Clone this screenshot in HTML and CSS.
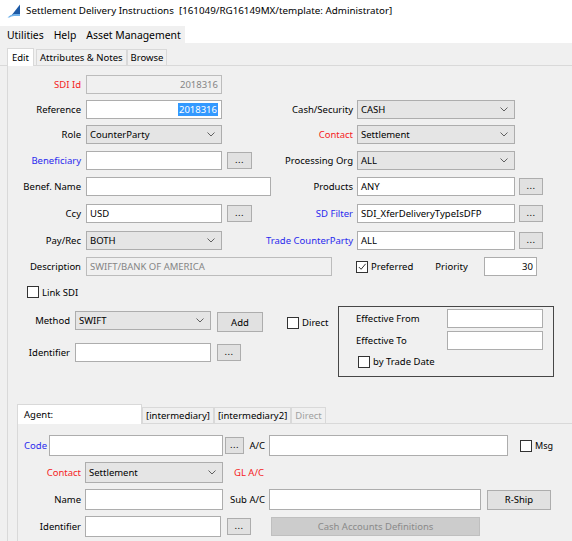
FILE: index.html
```html
<!DOCTYPE html>
<html lang="en">
<head>
    <meta charset="UTF-8">
    <meta name="viewport" content="width=device-width, initial-scale=1.0">
    <title>Settlement Delivery Instructions</title>
    <link rel="stylesheet" href="styles.css">
</head>
<body>

<div class="window">
    <div class="titlebar">
        <svg class="app-icon" viewBox="0 0 14 14" width="14" height="14">
            <path d="M13 0.5 L13 12 L4 12 Z" fill="#1d5aa6"/>
            <path d="M0.5 13.5 Q3 10.5 7 10 L13 10 L13 12 L7 12 Q4 12.3 2.5 13.5 Z" fill="#6fb1ea"/>
        </svg>
        <span class="title">Settlement Delivery Instructions&nbsp; [161049/RG16149MX/template: Administrator]</span>
    </div>

    <div class="menubar-row">
        <div class="menubar">
            <span>Utilities</span>
            <span>Help</span>
            <span>Asset Management</span>
        </div>
    </div>

    <div class="tabstrip main-tabs">
        <div class="tab active">Edit</div>
        <div class="tab">Attributes &amp; Notes</div>
        <div class="tab">Browse</div>
    </div>

    <div class="panel">
        <!-- header fields -->
        <div class="sdi-grid">
            <div class="lbl c-lbl red">SDI Id</div>
            <div class="field c-fld disabled num">2018316</div>

            <div class="lbl c-lbl">Reference</div>
            <div class="field c-fld num"><span class="selected">2018316</span></div>
            <div class="lbl c-rlbl">Cash/Security</div>
            <div class="field combo c-rfld"><span>CASH</span><svg class="chev" viewBox="0 0 8 5"><path d="M0.5 0.5 L4 4 L7.5 0.5" fill="none" stroke="#606060" stroke-width="1"/></svg></div>

            <div class="lbl c-lbl">Role</div>
            <div class="field combo c-fld"><span>CounterParty</span><svg class="chev" viewBox="0 0 8 5"><path d="M0.5 0.5 L4 4 L7.5 0.5" fill="none" stroke="#606060" stroke-width="1"/></svg></div>
            <div class="lbl c-rlbl red">Contact</div>
            <div class="field combo c-rfld"><span>Settlement</span><svg class="chev" viewBox="0 0 8 5"><path d="M0.5 0.5 L4 4 L7.5 0.5" fill="none" stroke="#606060" stroke-width="1"/></svg></div>

            <div class="lbl c-lbl blue">Beneficiary</div>
            <div class="field c-fld"></div>
            <div class="btn dots c-btn">...</div>
            <div class="lbl c-rlbl">Processing Org</div>
            <div class="field combo c-rfld"><span>ALL</span><svg class="chev" viewBox="0 0 8 5"><path d="M0.5 0.5 L4 4 L7.5 0.5" fill="none" stroke="#606060" stroke-width="1"/></svg></div>

            <div class="lbl c-lbl">Benef. Name</div>
            <div class="field c-fld wide-name"></div>
            <div class="lbl c-rlbl">Products</div>
            <div class="field c-rfld">ANY</div>
            <div class="btn dots c-rbtn">...</div>

            <div class="lbl c-lbl">Ccy</div>
            <div class="field c-fld">USD</div>
            <div class="btn dots c-btn">...</div>
            <div class="lbl c-rlbl blue">SD Filter</div>
            <div class="field c-rfld">SDI_XferDeliveryTypeIsDFP</div>
            <div class="btn dots c-rbtn">...</div>

            <div class="lbl c-lbl">Pay/Rec</div>
            <div class="field combo c-fld"><span>BOTH</span><svg class="chev" viewBox="0 0 8 5"><path d="M0.5 0.5 L4 4 L7.5 0.5" fill="none" stroke="#606060" stroke-width="1"/></svg></div>
            <div class="lbl c-rlbl blue">Trade CounterParty</div>
            <div class="field c-rfld">ALL</div>
            <div class="btn dots c-rbtn">...</div>

            <div class="lbl c-lbl">Description</div>
            <div class="field c-fld disabled wide-desc">SWIFT/BANK OF AMERICA</div>
            <div class="pref-group">
                <span class="check checked"><svg viewBox="0 0 11 11"><path d="M2 5.5 L4.5 8 L9.5 2" fill="none" stroke="#333" stroke-width="1.1"/></svg></span>
                <span class="check-label">Preferred</span>
                <span class="priority-label">Priority</span>
                <div class="field num priority">30</div>
            </div>
        </div>

        <div class="link-row">
            <span class="check"></span>
            <span class="check-label">Link SDI</span>
        </div>

        <div class="method-area">
            <div class="method-grid">
                <div class="lbl">Method</div>
                <div class="field combo"><span>SWIFT</span><svg class="chev" viewBox="0 0 8 5"><path d="M0.5 0.5 L4 4 L7.5 0.5" fill="none" stroke="#606060" stroke-width="1"/></svg></div>
                <div class="btn add-btn">Add</div>

                <div class="lbl">Identifier</div>
                <div class="field"></div>
                <div class="btn dots">...</div>
            </div>

            <div class="direct">
                <span class="check"></span>
                <span class="check-label">Direct</span>
            </div>

            <div class="effective-box">
                <div class="eff-grid">
                    <div class="eff-label">Effective From</div>
                    <div class="field"></div>
                    <div class="eff-label">Effective To</div>
                    <div class="field"></div>
                </div>
                <div class="trade-date">
                    <span class="check"></span>
                    <span class="check-label">by Trade Date</span>
                </div>
            </div>
        </div>

        <!-- agent / intermediary details -->
        <div class="agent">
            <div class="tabstrip agent-tabs">
                <div class="tab active agent-tab">Agent:</div>
                <div class="tab">[intermediary]</div>
                <div class="tab">[intermediary2]</div>
                <div class="tab disabled-tab">Direct</div>
            </div>
            <div class="agent-panel">
                <div class="arow">
                    <div class="lbl blue code-lbl">Code</div>
                    <div class="field code-fld"></div>
                    <div class="btn dots code-btn">...</div>
                    <div class="lbl ac-lbl">A/C</div>
                    <div class="field ac-fld"></div>
                    <span class="check msg-check"></span>
                    <span class="check-label small">Msg</span>
                </div>
                <div class="arow">
                    <div class="lbl red a-lbl">Contact</div>
                    <div class="field combo a-fld"><span>Settlement</span><svg class="chev" viewBox="0 0 8 5"><path d="M0.5 0.5 L4 4 L7.5 0.5" fill="none" stroke="#606060" stroke-width="1"/></svg></div>
                    <div class="lbl red gl-lbl">GL A/C</div>
                </div>
                <div class="arow">
                    <div class="lbl a-lbl">Name</div>
                    <div class="field a-fld"></div>
                    <div class="lbl sub-lbl">Sub A/C</div>
                    <div class="field sub-fld"></div>
                    <div class="btn rship">R-Ship</div>
                </div>
                <div class="arow">
                    <div class="lbl a-lbl">Identifier</div>
                    <div class="field a-fld short"></div>
                    <div class="btn dots id-btn">...</div>
                    <div class="btn off cash-btn">Cash Accounts Definitions</div>
                </div>
            </div>
        </div>
    </div>
</div>

</body>
</html>
```

FILE: styles.css
```css
* {
    box-sizing: border-box;
}

body {
    margin: 0;
    font-family: "Noto Sans", "Open Sans", sans-serif;
    font-size: 9.5px;
    color: #000;
    background-color: #f0f0f0;
}

.window {
    width: 572px;
    height: 541px;
    overflow: hidden;
    background-color: #f0f0f0;
}

/* title + menu */
.titlebar {
    height: 26px;
    background-color: #fff;
    display: flex;
    align-items: center;
    padding: 0 0 5px 7px;
}

.app-icon {
    margin-right: 5px;
}

.title {
    font-size: 9.8px;
    white-space: nowrap;
}

.menubar-row {
    height: 17px;
    background-color: #fff;
}

.menubar {
    width: 185px;
    height: 17px;
    background-color: #f0f0f0;
    display: flex;
    align-items: center;
    padding-left: 7px;
    font-size: 10.4px;
    white-space: nowrap;
}

.menubar span {
    margin-right: 10px;
}

/* tabs */
.tabstrip {
    display: flex;
    align-items: flex-end;
    border-bottom: 1px solid #d9d9d9;
}

.main-tabs {
    height: 23px;
    padding-left: 7px;
}

.tab {
    height: 16px;
    padding: 0 3px;
    border: 1px solid #d9d9d9;
    border-bottom: none;
    background-color: #f0f0f0;
    display: flex;
    align-items: center;
    white-space: nowrap;
}

.tab.active {
    height: 18px;
    margin-bottom: -1px;
    margin-right: 2px;
    padding: 0 4px;
    background-color: #fff;
}

.disabled-tab {
    color: #a0a0a0;
}

.panel {
    margin-left: 7px;
    border-left: 1px solid #d9d9d9;
    height: 475px;
    padding-top: 9px;
}

/* generic controls */
.lbl {
    white-space: nowrap;
    display: flex;
    align-items: center;
    justify-content: flex-end;
    height: 19px;
}

.red {
    color: #f51c24;
}

.blue {
    color: #2a2aee;
}

.field {
    height: 19px;
    border: 1px solid #adadad;
    background-color: #fff;
    padding: 0 3px;
    display: flex;
    align-items: center;
    white-space: nowrap;
    overflow: hidden;
}

.field.num {
    justify-content: flex-end;
}

.field.disabled {
    background-color: #f0f0f0;
    border-color: #bcbcbc;
    color: #858585;
}

.selected {
    background-color: #3399ff;
    color: #fff;
    padding: 0 1px;
}

.combo {
    background-color: #e5e5e5;
    justify-content: space-between;
    padding-right: 6px;
}

.chev {
    width: 8px;
    height: 5px;
}

.btn {
    height: 17px;
    border: 1px solid #adadad;
    background-color: #e1e1e1;
    display: flex;
    align-items: center;
    justify-content: center;
    white-space: nowrap;
}

.dots {
    padding-bottom: 2px;
    letter-spacing: 0.5px;
}

.btn.off {
    background-color: #cccccc;
    border-color: #bfbfbf;
    color: #8a8a8a;
}

.check {
    width: 12px;
    height: 12px;
    border: 1px solid #333;
    background-color: #fff;
    display: inline-block;
    flex-shrink: 0;
}

.check svg {
    display: block;
    width: 10px;
    height: 10px;
}

.check-label {
    margin-left: 3px;
    white-space: nowrap;
}

/* header grid */
.sdi-grid {
    display: grid;
    grid-template-columns: 73px 5px 136px 5px 25px 101px 4px 158px 4px 24px;
    grid-template-rows: 25px 25px 26px 26px 27px 27px 26px 20px;
    align-items: start;
}

.c-lbl { grid-column: 1; }
.c-fld { grid-column: 3; }
.c-btn { grid-column: 5; margin-top: 1px; }
.c-rlbl { grid-column: 6; }
.c-rfld { grid-column: 8; }
.c-rbtn { grid-column: 10; margin-top: 1px; }

.wide-name {
    width: 185px;
}

.wide-desc {
    width: 246px;
}

.pref-group {
    grid-column: 8 / 11;
    display: flex;
    align-items: center;
    height: 19px;
    margin-left: -1px;
}

.priority-label {
    margin-left: 22px;
}

.priority {
    width: 53px;
    margin-left: 16px;
}

/* lower left part */
.link-row {
    display: flex;
    align-items: center;
    margin: 9px 0 0 19px;
    height: 12px;
}

.method-area {
    display: flex;
    align-items: flex-start;
    margin-top: 8px;
}

.method-grid {
    width: 256px;
    display: grid;
    grid-template-columns: 62px 136px 47px;
    column-gap: 5px;
    row-gap: 11px;
    padding-top: 5px;
}

.method-grid .btn {
    margin-left: 1px;
}

.add-btn {
    height: 20px;
    margin-top: 1px;
}

.method-grid .dots {
    width: 24px;
    margin-top: 1px;
}

.direct {
    width: 51px;
    margin: 10px 0 0 23px;
    display: flex;
    align-items: center;
}

.effective-box {
    width: 216px;
    height: 71px;
    border: 1px solid #474747;
    padding: 2px 10px 0 17px;
}

.eff-grid {
    display: grid;
    grid-template-columns: 1fr 96px;
    grid-template-rows: 19px 18px;
    row-gap: 3px;
    align-items: center;
}

.trade-date {
    display: flex;
    align-items: center;
    margin: 6px 0 0 2px;
}

/* agent panel */
.agent {
    margin: 28px 0 0 9px;
}

.agent-tabs {
    height: 19px;
}

.tab.agent-tab {
    width: 125px;
    height: 20px;
    padding-left: 6px;
    margin-right: 0;
}

.agent-panel {
    border-left: 1px solid #d9d9d9;
    height: 120px;
    padding-top: 11px;
    display: flex;
    flex-direction: column;
    gap: 6px;
}

.arow {
    display: flex;
    align-items: center;
    height: 21px;
}

.arow .field {
    height: 21px;
}

.code-lbl { width: 29px; }
.code-fld { width: 174px; margin-left: 2px; }
.code-btn { width: 19px; margin-left: 2px; }
.ac-lbl { width: 21px; }
.ac-fld { width: 239px; margin-left: 4px; }
.msg-check { margin-left: 12px; }
.small { font-size: 9px; }

.a-lbl { width: 63px; }
.a-fld { width: 138px; margin-left: 4px; }
.a-fld.short { width: 136px; }
.gl-lbl { margin-left: 11px; }
.sub-lbl { width: 42px; }
.sub-fld { width: 212px; margin-left: 4px; }
.rship { width: 64px; height: 20px; margin-left: 6px; }
.id-btn { width: 24px; margin-left: 6px; }
.cash-btn { width: 209px; height: 19px; margin-left: 20px; }
```
